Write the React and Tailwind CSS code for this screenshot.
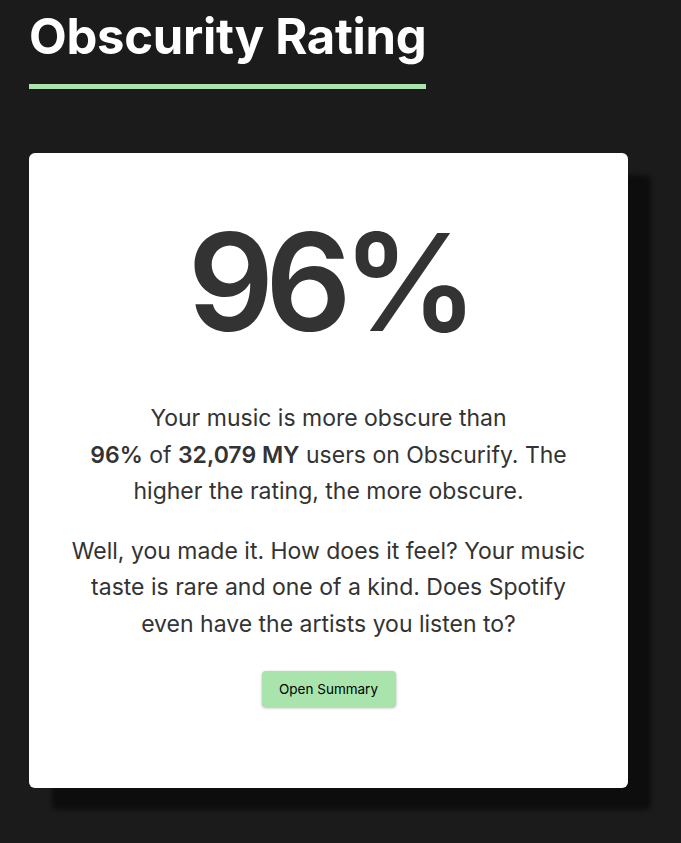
export default function App() {
  return (
    <div className="min-h-screen bg-[#1b1b1b] px-[29px] pt-[6px] pb-10 font-['Inter',sans-serif]">
      <div className="inline-block">
        <h1 className="text-[49px] font-bold leading-[62px] text-white tracking-[-0.3px]">Obscurity Rating</h1>
        <div className="mt-[16px] h-[5px] bg-[#a8e4ab]"></div>
      </div>

      <div className="mt-[64px] w-[599px] h-[635px] rounded-md bg-white shadow-[23px_22px_4px_rgba(0,0,0,0.5)] px-[40px] pt-[54px] text-center text-[#333]">
        <div className="text-[135px] font-semibold leading-[150px] tracking-[-9px]">96%</div>
        <p className="mt-[43px] text-[23px] leading-[36.5px]">
          Your music is more obscure than <br />
          <span className="font-semibold">96%</span> of <span className="font-semibold">32,079 MY</span> users on Obscurify. The higher the rating, the more obscure.
        </p>
        <p className="mt-[23px] text-[23px] leading-[36.5px]">
          Well, you made it. How does it feel? Your music taste is rare and one of a kind. Does Spotify even have the artists you listen to?
        </p>
        <button className="mt-[29px] h-[36px] w-[134px] rounded bg-[#a8e4ab] text-[13.5px] text-black shadow-[0_1px_3px_rgba(0,0,0,0.3)]">
          Open Summary
        </button>
      </div>
    </div>
  );
}
